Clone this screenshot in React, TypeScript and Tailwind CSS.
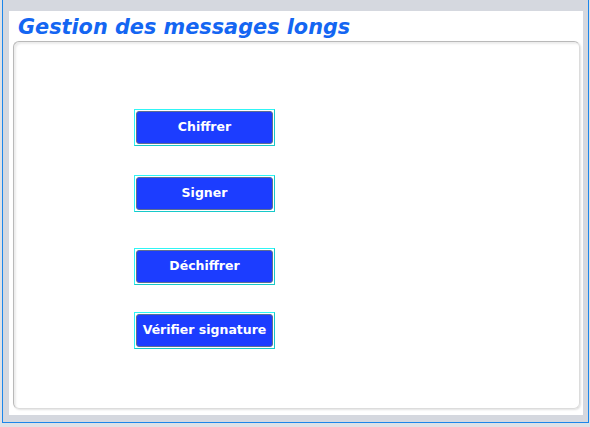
const buttons = [
  { label: "Chiffrer", mt: "mt-[67px]" },
  { label: "Signer", mt: "mt-[29px]" },
  { label: "Déchiffrer", mt: "mt-[36px]" },
  { label: "Vérifier signature", mt: "mt-[27px]" },
];

function ActionButton({ label, mt }: { label: string; mt: string }) {
  return (
    <div
      className={`${mt} w-[141px] h-[37px] border border-t-[#2ff5f5] border-l-[#2ff5f5] border-r-[#17c9c9] border-b-[#17c9c9] p-px`}
    >
      <button
        type="button"
        className="w-full h-full rounded-[3px] border border-[#5d6d92] bg-[#1c3dff] text-white text-[12.5px] font-bold"
        style={{ fontFamily: '"DejaVu Sans", Verdana, sans-serif' }}
      >
        {label}
      </button>
    </div>
  );
}

export default function App() {
  return (
    <div className="w-[590px] h-[427px] bg-[#dfe1e6] overflow-hidden">
      <div className="ml-[2px] w-[587px] h-[423px] border-l border-r border-b border-[#1c86ea] bg-[#d5d8df] pl-[6px] pr-[5px] pt-[11px] pb-[7px]">
        <div className="w-full h-full bg-white flex flex-col pl-[4px] pr-[3px] pb-[6px]">
          <h1
            className="h-[30px] pl-[5px] pt-[3px] text-[20.8px] leading-[26px] font-bold italic text-[#1466f2]"
            style={{ fontFamily: '"DejaVu Sans", Verdana, sans-serif' }}
          >
            Gestion des messages longs
          </h1>
          <div className="flex-1 rounded-[6px] border border-[#b9b9b9] border-r-[#dcdcdc] border-b-[#dcdcdc] shadow-[inset_2px_2px_2px_rgba(0,0,0,0.08),1px_1px_2px_rgba(0,0,0,0.12)] flex flex-col pl-[120px]">
            {buttons.map((b) => (
              <ActionButton key={b.label} label={b.label} mt={b.mt} />
            ))}
          </div>
        </div>
      </div>
    </div>
  );
}
